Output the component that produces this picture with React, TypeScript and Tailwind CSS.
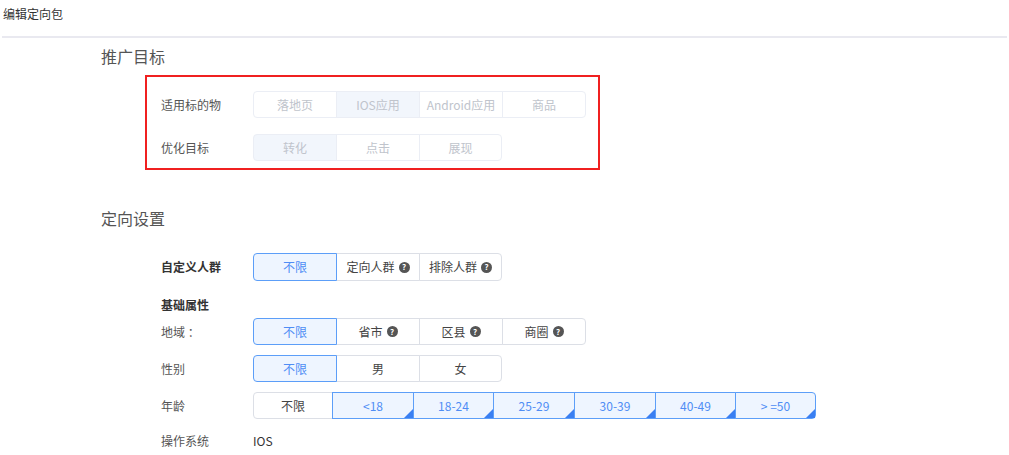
import React from "react";

type Btn = { label: string; w: number; selected?: boolean; help?: boolean; corner?: boolean };

function Help() {
  return (
    <span className="ml-[4px] inline-flex h-[11px] w-[11px] items-center justify-center rounded-full bg-[#555] text-[8px] font-bold leading-none text-white">
      ?
    </span>
  );
}

function Corner() {
  return (
    <svg className="absolute bottom-0 right-0" width="9" height="9" viewBox="0 0 9 9">
      <polygon points="9,0 9,9 0,9" fill="#3a7ff2" />
    </svg>
  );
}

function Group({ items, disabled, h = 28 }: { items: Btn[]; disabled?: boolean; h?: number }) {
  return (
    <div className="flex">
      {items.map((b, i) => {
        const first = i === 0;
        const last = i === items.length - 1;
        let cls = "relative flex items-center justify-center border text-[12px] ";
        if (disabled) {
          cls += b.selected
            ? "border-[#ebeef5] bg-[#f2f6fc] text-[#c0c4cc] "
            : "border-[#ebeef5] bg-white text-[#c0c4cc] ";
        } else if (b.selected) {
          cls += "z-10 border-[#5c9ef8] bg-[#eef5ff] text-[#4f8df5] ";
        } else {
          cls += "border-[#dcdfe6] bg-white text-[#444] ";
        }
        if (!first) cls += "-ml-px ";
        if (first) cls += "rounded-l-[4px] ";
        if (last) cls += "rounded-r-[4px] ";
        return (
          <div key={i} className={cls} style={{ width: b.w, height: h }}>
            <span>{b.label}</span>
            {b.help && <Help />}
            {b.corner && <Corner />}
          </div>
        );
      })}
    </div>
  );
}

function Row({ label, bold, children, className = "" }: { label: string; bold?: boolean; children: React.ReactNode; className?: string }) {
  return (
    <div className={"flex items-center " + className}>
      <div className={"w-[92px] whitespace-pre text-[12px] " + (bold ? "font-bold text-[#333]" : "text-[#555]")}>{label}</div>
      {children}
    </div>
  );
}

export default function App() {
  return (
    <div
      className="min-h-[455px] w-[1009px] bg-white"
      style={{ fontFamily: '"Noto Sans CJK SC", "Noto Sans", sans-serif' }}
    >
      <div className="pl-[3px] pt-[4px] text-[12px] leading-[20px] text-[#333]">编辑定向包</div>
      <div className="mx-[2px] mt-[12px] h-[2px] bg-[#e9e9f0]" />

      <div className="pl-[101px]">
        <div className="mt-[6px] text-[16px] leading-[24px] text-[#555]">推广目标</div>
      </div>

      <div className="ml-[145px] mt-[7px] w-[455px] border-2 border-[#f02020] pb-[7px] pl-[14px] pt-[14px]">
        <Row label="适用标的物">
          <Group
            disabled
            h={27}
            items={[
              { label: "落地页", w: 84 },
              { label: "IOS应用", w: 84, selected: true },
              { label: "Android应用", w: 84 },
              { label: "商品", w: 84 },
            ]}
          />
        </Row>
        <Row label="优化目标" className="mt-[16px]">
          <Group
            disabled
            h={27}
            items={[
              { label: "转化", w: 84, selected: true },
              { label: "点击", w: 84 },
              { label: "展现", w: 83 },
            ]}
          />
        </Row>
      </div>

      <div className="pl-[101px]">
        <div className="mt-[36px] text-[16px] leading-[24px] text-[#555]">定向设置</div>
      </div>

      <div className="pl-[161px]">
        <Row label="自定义人群" bold className="mt-[23px]">
          <Group
            items={[
              { label: "不限", w: 84, selected: true },
              { label: "定向人群", w: 84, help: true },
              { label: "排除人群", w: 83, help: true },
            ]}
          />
        </Row>
        <div className="mt-[14px] text-[12px] font-bold leading-[20px] text-[#333]">基础属性</div>
        <Row label="地域 ：" className="mt-[3px]">
          <Group
            h={27}
            items={[
              { label: "不限", w: 84, selected: true },
              { label: "省市", w: 84, help: true },
              { label: "区县", w: 84, help: true },
              { label: "商圈", w: 84, help: true },
            ]}
          />
        </Row>
        <Row label="性别" className="mt-[10px]">
          <Group
            h={27}
            items={[
              { label: "不限", w: 84, selected: true },
              { label: "男", w: 84 },
              { label: "女", w: 83 },
            ]}
          />
        </Row>
        <Row label="年龄" className="mt-[10px]">
          <Group
            h={27}
            items={[
              { label: "不限", w: 80 },
              { label: "<18", w: 82, selected: true, corner: true },
              { label: "18-24", w: 81, selected: true, corner: true },
              { label: "25-29", w: 82, selected: true, corner: true },
              { label: "30-39", w: 82, selected: true, corner: true },
              { label: "40-49", w: 81, selected: true, corner: true },
              { label: "> =50", w: 81, selected: true, corner: true },
            ]}
          />
        </Row>
        <div className="mt-[12px] flex items-center leading-[20px]">
          <div className="w-[92px] text-[12px] text-[#555]">操作系统</div>
          <div className="text-[12px] text-[#333]">IOS</div>
        </div>
      </div>
    </div>
  );
}
